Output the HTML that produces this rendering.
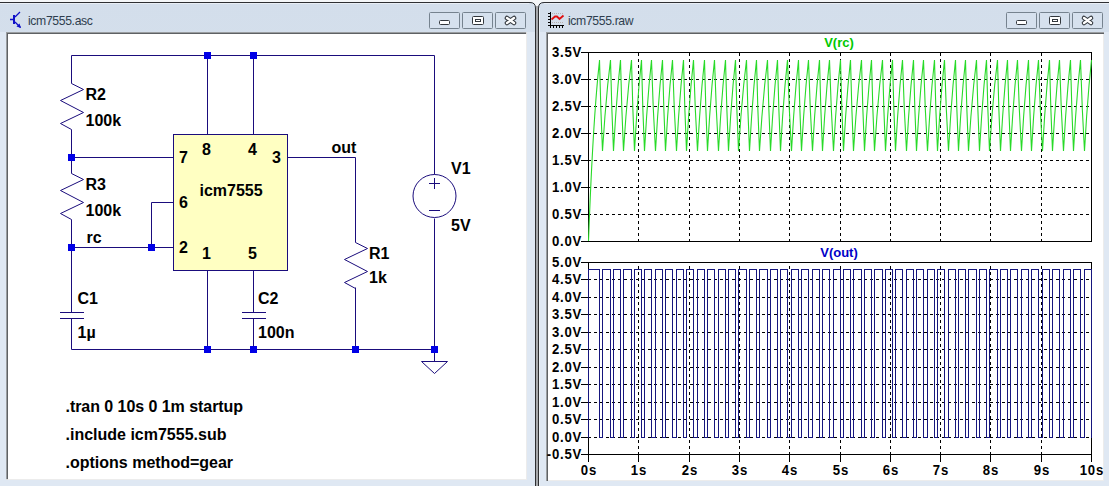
<!DOCTYPE html>
<html><head><meta charset="utf-8"><style>
html,body{margin:0;padding:0;width:1109px;height:486px;overflow:hidden;background:#eef1f5}
svg{display:block}
</style></head><body>
<svg width="1109" height="486" viewBox="0 0 1109 486">
<defs><linearGradient id="fg" x1="0" y1="0" x2="0" y2="1"><stop offset="0" stop-color="#d3deeb"/><stop offset="1" stop-color="#dfe8f3"/></linearGradient></defs>
<rect x="0" y="0" width="1109" height="486" fill="#f4f6f8"/>
<path d="M-10 486 L-10 8 Q-10 2 -4 2 L530 2 Q536 2 536 8 L536 486 Z" fill="url(#fg)"/>
<rect x="0" y="32" width="535" height="454" fill="#dfe8f3"/>
<path d="M535.5 486 L535.5 8 Q535.5 2.5 530 2.5 L-10 2.5" fill="none" stroke="#2e3033" stroke-width="1"/>
<path d="M-10 3.5 L529 3.5" stroke="#e8eef5" stroke-width="1"/>
<rect x="536" y="6" width="2" height="480" fill="#a6a8ab"/>
<path d="M538 486 L538 8 Q538 2 544 2 L1120 2 L1120 486 Z" fill="url(#fg)"/>
<rect x="539" y="32" width="580" height="454" fill="#dfe8f3"/>
<path d="M538.5 486 L538.5 8 Q538.5 2.5 544 2.5 L1120 2.5" fill="none" stroke="#2e3033" stroke-width="1"/>
<path d="M544 3.5 L1120 3.5" stroke="#e8eef5" stroke-width="1"/>
<rect x="539" y="8" width="1" height="478" fill="#eaf0f6"/>
<rect x="6" y="32" width="521" height="448" fill="#dedede"/>
<rect x="6" y="32" width="520" height="447" fill="#9a9da0"/>
<rect x="7" y="33" width="519" height="446" fill="#5e6164"/>
<rect x="8" y="34" width="518" height="445" fill="#ffffff"/>
<rect x="526" y="34" width="1" height="446" fill="#ececec"/><rect x="8" y="479" width="519" height="1" fill="#ececec"/>
<rect x="546" y="32" width="558" height="449" fill="#9a9da0"/>
<rect x="547" y="33" width="557" height="448" fill="#5e6164"/>
<rect x="548" y="34" width="555" height="446" fill="#ffffff"/>
<rect x="1103" y="34" width="1" height="447" fill="#ececec"/><rect x="548" y="480" width="556" height="1" fill="#ececec"/>
<text x="28" y="24.6" font-family="Liberation Sans" font-size="12.2" letter-spacing="-0.35" fill="#2e3d4e">icm7555.asc</text>
<text x="568" y="24.6" font-family="Liberation Sans" font-size="12.2" letter-spacing="-0.35" fill="#2e3d4e">icm7555.raw</text>
<rect x="429.5" y="12.5" width="30" height="16" rx="1" fill="#d6e1ee" stroke="#76838f"/><rect x="462.5" y="12.5" width="30" height="16" rx="1" fill="#d6e1ee" stroke="#76838f"/><rect x="495.5" y="12.5" width="30" height="16" rx="1" fill="#d6e1ee" stroke="#76838f"/><rect x="439.5" y="20.5" width="10" height="4" rx="1" fill="#fff" stroke="#33383e"/><rect x="472.5" y="16.5" width="11" height="8" rx="1" fill="#fff" stroke="#33383e"/><rect x="475.5" y="19.5" width="5" height="2" fill="#fff" stroke="#33383e"/><path d="M507.0 18.0 L514.0 23.0 M514.0 18.0 L507.0 23.0" stroke="#33383e" stroke-width="4.6" stroke-linecap="round"/><path d="M507.0 18.0 L514.0 23.0 M514.0 18.0 L507.0 23.0" stroke="#fff" stroke-width="2.4" stroke-linecap="round"/>
<rect x="1006.5" y="12.5" width="30" height="16" rx="1" fill="#d6e1ee" stroke="#76838f"/><rect x="1039.5" y="12.5" width="30" height="16" rx="1" fill="#d6e1ee" stroke="#76838f"/><rect x="1072.5" y="12.5" width="30" height="16" rx="1" fill="#d6e1ee" stroke="#76838f"/><rect x="1016.5" y="20.5" width="10" height="4" rx="1" fill="#fff" stroke="#33383e"/><rect x="1049.5" y="16.5" width="11" height="8" rx="1" fill="#fff" stroke="#33383e"/><rect x="1052.5" y="19.5" width="5" height="2" fill="#fff" stroke="#33383e"/><path d="M1084.0 18.0 L1091.0 23.0 M1091.0 18.0 L1084.0 23.0" stroke="#33383e" stroke-width="4.6" stroke-linecap="round"/><path d="M1084.0 18.0 L1091.0 23.0 M1091.0 18.0 L1084.0 23.0" stroke="#fff" stroke-width="2.4" stroke-linecap="round"/>
<g stroke="#1010c8" fill="none" stroke-width="1.3"><path d="M10 19.5 L13 19.5 M15 17 L20 12 M15 22 L20.5 27.5"/></g>
<rect x="13" y="15" width="2" height="9" fill="#1010c8"/>
<path d="M21 28 L16.5 26.5 L19.5 23.5 Z" fill="#1010c8"/>
<path d="M552 13.5 L563 13.5 M552 22.5 L563 22.5" stroke="#b8b0b0" stroke-dasharray="1 1"/>
<rect x="550" y="12" width="1" height="16" fill="#000"/><rect x="548" y="25" width="16" height="1" fill="#000"/>
<rect x="548" y="13" width="2" height="1" fill="#000"/>
<rect x="548" y="16" width="2" height="1" fill="#000"/>
<rect x="548" y="19" width="2" height="1" fill="#000"/>
<rect x="548" y="22" width="2" height="1" fill="#000"/>
<rect x="550" y="26" width="1" height="2" fill="#000"/>
<rect x="553" y="26" width="1" height="2" fill="#000"/>
<rect x="556" y="26" width="1" height="2" fill="#000"/>
<rect x="559" y="26" width="1" height="2" fill="#000"/>
<rect x="562" y="26" width="1" height="2" fill="#000"/>
<path d="M551.5 19.5 L555 16.5 L557 16.5 L559.5 19 L563.5 15.5" stroke="#e01010" stroke-width="1.8" fill="none"/>
<rect x="173.5" y="134.5" width="114" height="136" fill="#ffffc2" stroke="#1a0c7c"/>
<path d="M71.5 55.5 L434.5 55.5" fill="none" stroke="#1a0c7c" stroke-width="1"/>
<path d="M71.5 55.5 L71.5 83.5" fill="none" stroke="#1a0c7c" stroke-width="1"/>
<path d="M71.5 129.5 L71.5 173.5" fill="none" stroke="#1a0c7c" stroke-width="1"/>
<path d="M71.5 219.5 L71.5 312.5" fill="none" stroke="#1a0c7c" stroke-width="1"/>
<path d="M71.5 318.5 L71.5 349.5" fill="none" stroke="#1a0c7c" stroke-width="1"/>
<path d="M71.5 349.5 L434.5 349.5" fill="none" stroke="#1a0c7c" stroke-width="1"/>
<path d="M71.5 157.5 L173.5 157.5" fill="none" stroke="#1a0c7c" stroke-width="1"/>
<path d="M151.5 202.5 L173.5 202.5" fill="none" stroke="#1a0c7c" stroke-width="1"/>
<path d="M71.5 247.5 L173.5 247.5" fill="none" stroke="#1a0c7c" stroke-width="1"/>
<path d="M151.5 202.5 L151.5 247.5" fill="none" stroke="#1a0c7c" stroke-width="1"/>
<path d="M207.5 55.5 L207.5 134.5" fill="none" stroke="#1a0c7c" stroke-width="1"/>
<path d="M253.5 55.5 L253.5 134.5" fill="none" stroke="#1a0c7c" stroke-width="1"/>
<path d="M207.5 270.5 L207.5 349.5" fill="none" stroke="#1a0c7c" stroke-width="1"/>
<path d="M253.5 270.5 L253.5 312.5" fill="none" stroke="#1a0c7c" stroke-width="1"/>
<path d="M253.5 318.5 L253.5 349.5" fill="none" stroke="#1a0c7c" stroke-width="1"/>
<path d="M287.5 157.5 L355.5 157.5 L355.5 242.5" fill="none" stroke="#1a0c7c" stroke-width="1"/>
<path d="M355.5 287.5 L355.5 349.5" fill="none" stroke="#1a0c7c" stroke-width="1"/>
<path d="M434.5 55.5 L434.5 174.5" fill="none" stroke="#1a0c7c" stroke-width="1"/>
<path d="M434.5 218.5 L434.5 361.5" fill="none" stroke="#1a0c7c" stroke-width="1"/>
<path d="M71.5 83.5 L83.5 89.5 L60.5 100.5 L83.5 112.5 L60.5 123.5 L71.5 129.5" fill="none" stroke="#1a0c7c" stroke-width="1"/>
<path d="M71.5 173.5 L83.5 179.5 L60.5 190.5 L83.5 202.5 L60.5 213.5 L71.5 219.5" fill="none" stroke="#1a0c7c" stroke-width="1"/>
<path d="M355.5 242.5 L367.5 248.5 L344.5 259.5 L367.5 271.5 L344.5 282.5 L355.5 288.5" fill="none" stroke="#1a0c7c" stroke-width="1"/>
<path d="M60 312.5 L84 312.5 M60 318.5 L84 318.5" stroke="#1a0c7c" stroke-width="1" fill="none"/>
<path d="M242 312.5 L266 312.5 M242 318.5 L266 318.5" stroke="#1a0c7c" stroke-width="1" fill="none"/>
<circle cx="434.5" cy="196" r="21.5" fill="none" stroke="#1a0c7c"/>
<path d="M429 183.5 L440 183.5 M434.5 178 L434.5 189 M429 210.5 L440 210.5" stroke="#1a0c7c" fill="none"/>
<path d="M421.5 361.5 L447.5 361.5 L434.5 373.5 Z" fill="none" stroke="#1a0c7c"/>
<rect x="204" y="52" width="7" height="7" fill="#0000e6"/>
<rect x="250" y="52" width="7" height="7" fill="#0000e6"/>
<rect x="68" y="154" width="7" height="7" fill="#0000e6"/>
<rect x="68" y="244" width="7" height="7" fill="#0000e6"/>
<rect x="148" y="244" width="7" height="7" fill="#0000e6"/>
<rect x="204" y="346" width="7" height="7" fill="#0000e6"/>
<rect x="250" y="346" width="7" height="7" fill="#0000e6"/>
<rect x="352" y="346" width="7" height="7" fill="#0000e6"/>
<rect x="431" y="346" width="7" height="7" fill="#0000e6"/>
<text x="85.5" y="100" font-family="Liberation Sans" font-weight="bold" font-size="16" fill="#000" >R2</text>
<text x="85.5" y="126" font-family="Liberation Sans" font-weight="bold" font-size="16" fill="#000" >100k</text>
<text x="85.5" y="190" font-family="Liberation Sans" font-weight="bold" font-size="16" fill="#000" >R3</text>
<text x="85.5" y="216" font-family="Liberation Sans" font-weight="bold" font-size="16" fill="#000" >100k</text>
<text x="86.5" y="243" font-family="Liberation Sans" font-weight="bold" font-size="16" fill="#000" >rc</text>
<text x="77.5" y="304" font-family="Liberation Sans" font-weight="bold" font-size="16" fill="#000" >C1</text>
<text x="77.5" y="338" font-family="Liberation Sans" font-weight="bold" font-size="16" fill="#000" >1µ</text>
<text x="258" y="304" font-family="Liberation Sans" font-weight="bold" font-size="16" fill="#000" >C2</text>
<text x="258" y="338" font-family="Liberation Sans" font-weight="bold" font-size="16" fill="#000" >100n</text>
<text x="369" y="259" font-family="Liberation Sans" font-weight="bold" font-size="16" fill="#000" >R1</text>
<text x="369" y="283" font-family="Liberation Sans" font-weight="bold" font-size="16" fill="#000" >1k</text>
<text x="331.5" y="153" font-family="Liberation Sans" font-weight="bold" font-size="16" fill="#000" >out</text>
<text x="451" y="174" font-family="Liberation Sans" font-weight="bold" font-size="16" fill="#000" >V1</text>
<text x="451" y="231" font-family="Liberation Sans" font-weight="bold" font-size="16" fill="#000" >5V</text>
<text x="199.5" y="195.5" font-family="Liberation Sans" font-weight="bold" font-size="16" fill="#000" >icm7555</text>
<text x="179" y="163" font-family="Liberation Sans" font-weight="bold" font-size="16" fill="#000" >7</text>
<text x="202" y="155" font-family="Liberation Sans" font-weight="bold" font-size="16" fill="#000" >8</text>
<text x="248" y="155" font-family="Liberation Sans" font-weight="bold" font-size="16" fill="#000" >4</text>
<text x="272" y="163" font-family="Liberation Sans" font-weight="bold" font-size="16" fill="#000" >3</text>
<text x="179" y="208" font-family="Liberation Sans" font-weight="bold" font-size="16" fill="#000" >6</text>
<text x="179" y="253" font-family="Liberation Sans" font-weight="bold" font-size="16" fill="#000" >2</text>
<text x="202" y="259" font-family="Liberation Sans" font-weight="bold" font-size="16" fill="#000" >1</text>
<text x="248" y="259" font-family="Liberation Sans" font-weight="bold" font-size="16" fill="#000" >5</text>
<text x="65.5" y="412" font-family="Liberation Sans" font-weight="bold" font-size="16" fill="#000" letter-spacing="-0.05">.tran 0 10s 0 1m startup</text>
<text x="65.5" y="440" font-family="Liberation Sans" font-weight="bold" font-size="16" fill="#000" >.include icm7555.sub</text>
<text x="65.5" y="468" font-family="Liberation Sans" font-weight="bold" font-size="16" fill="#000" >.options method=gear</text>
<g shape-rendering="crispEdges"><path d="M588 79.5 H1091" stroke="#000" stroke-dasharray="3 3"/><path d="M588 106.5 H1091" stroke="#000" stroke-dasharray="3 3"/><path d="M588 133.5 H1091" stroke="#000" stroke-dasharray="3 3"/><path d="M588 160.5 H1091" stroke="#000" stroke-dasharray="3 3"/><path d="M588 187.5 H1091" stroke="#000" stroke-dasharray="3 3"/><path d="M588 214.5 H1091" stroke="#000" stroke-dasharray="3 3"/><path d="M638.5 53 V241" stroke="#000" stroke-dasharray="3 3"/><path d="M689.5 53 V241" stroke="#000" stroke-dasharray="3 3"/><path d="M739.5 53 V241" stroke="#000" stroke-dasharray="3 3"/><path d="M789.5 53 V241" stroke="#000" stroke-dasharray="3 3"/><path d="M840.5 53 V241" stroke="#000" stroke-dasharray="3 3"/><path d="M890.5 53 V241" stroke="#000" stroke-dasharray="3 3"/><path d="M940.5 53 V241" stroke="#000" stroke-dasharray="3 3"/><path d="M990.5 53 V241" stroke="#000" stroke-dasharray="3 3"/><path d="M1041.5 53 V241" stroke="#000" stroke-dasharray="3 3"/><path d="M588 437.5 H1091" stroke="#000" stroke-dasharray="3 3"/><path d="M588 419.5 H1091" stroke="#000" stroke-dasharray="3 3"/><path d="M588 402.5 H1091" stroke="#000" stroke-dasharray="3 3"/><path d="M588 384.5 H1091" stroke="#000" stroke-dasharray="3 3"/><path d="M588 367.5 H1091" stroke="#000" stroke-dasharray="3 3"/><path d="M588 349.5 H1091" stroke="#000" stroke-dasharray="3 3"/><path d="M588 332.5 H1091" stroke="#000" stroke-dasharray="3 3"/><path d="M588 314.5 H1091" stroke="#000" stroke-dasharray="3 3"/><path d="M588 297.5 H1091" stroke="#000" stroke-dasharray="3 3"/><path d="M588 279.5 H1091" stroke="#000" stroke-dasharray="3 3"/><path d="M638.5 263 V454" stroke="#000" stroke-dasharray="3 3" stroke-dashoffset="3"/><path d="M689.5 263 V454" stroke="#000" stroke-dasharray="3 3" stroke-dashoffset="3"/><path d="M739.5 263 V454" stroke="#000" stroke-dasharray="3 3" stroke-dashoffset="3"/><path d="M789.5 263 V454" stroke="#000" stroke-dasharray="3 3" stroke-dashoffset="3"/><path d="M840.5 263 V454" stroke="#000" stroke-dasharray="3 3" stroke-dashoffset="3"/><path d="M890.5 263 V454" stroke="#000" stroke-dasharray="3 3" stroke-dashoffset="3"/><path d="M940.5 263 V454" stroke="#000" stroke-dasharray="3 3" stroke-dashoffset="3"/><path d="M990.5 263 V454" stroke="#000" stroke-dasharray="3 3" stroke-dashoffset="3"/><path d="M1041.5 263 V454" stroke="#000" stroke-dasharray="3 3" stroke-dashoffset="3"/></g>
<rect x="588.5" y="52.5" width="503" height="189" fill="none" stroke="#000" shape-rendering="crispEdges"/>
<rect x="588.5" y="262.5" width="503" height="192" fill="none" stroke="#000" shape-rendering="crispEdges"/>
<polyline points="588.50,241.00 588.75,234.33 589.00,227.83 589.25,221.49 589.50,215.31 589.75,209.27 590.00,203.39 590.25,197.65 590.50,192.06 590.75,186.60 591.00,181.28 591.25,176.08 591.50,171.02 591.75,166.08 592.00,161.27 592.25,156.57 592.50,151.99 592.75,147.52 593.00,143.16 593.25,138.91 593.50,134.76 593.75,130.72 594.00,126.78 594.25,122.93 594.50,119.18 594.75,115.52 595.00,111.95 595.25,108.47 595.50,105.08 595.75,101.77 596.00,98.54 596.25,95.39 596.50,92.32 596.75,89.32 597.00,86.40 597.25,83.55 597.50,80.77 597.75,78.06 598.00,75.42 598.25,72.84 598.50,70.33 598.75,67.88 599.00,65.48 599.25,63.15 599.50,60.88 599.50,60.10 600.85,108.86 602.50,150.98 604.90,116.76 607.70,84.96 610.50,60.10 611.85,108.86 613.50,150.98 615.60,116.76 618.05,84.96 620.50,60.10 621.85,108.86 623.50,150.98 625.90,116.76 628.70,84.96 631.50,60.10 632.85,108.86 634.50,150.98 636.60,116.76 639.05,84.96 641.50,60.10 642.85,108.86 644.50,150.98 646.60,116.76 649.05,84.96 651.50,60.10 653.30,108.86 655.50,150.98 657.60,116.76 660.05,84.96 662.50,60.10 663.85,108.86 665.50,150.98 667.60,116.76 670.05,84.96 672.50,60.10 674.30,108.86 676.50,150.98 678.60,116.76 681.05,84.96 683.50,60.10 684.85,108.86 686.50,150.98 688.60,116.76 691.05,84.96 693.50,60.10 695.30,108.86 697.50,150.98 699.60,116.76 702.05,84.96 704.50,60.10 705.85,108.86 707.50,150.98 709.60,116.76 712.05,84.96 714.50,60.10 716.30,108.86 718.50,150.98 720.60,116.76 723.05,84.96 725.50,60.10 726.85,108.86 728.50,150.98 730.60,116.76 733.05,84.96 735.50,60.10 736.85,108.86 738.50,150.98 740.90,116.76 743.70,84.96 746.50,60.10 747.85,108.86 749.50,150.98 751.60,116.76 754.05,84.96 756.50,60.10 757.85,108.86 759.50,150.98 761.90,116.76 764.70,84.96 767.50,60.10 768.85,108.86 770.50,150.98 772.60,116.76 775.05,84.96 777.50,60.10 778.85,108.86 780.50,150.98 782.60,116.76 785.05,84.96 787.50,60.10 789.30,108.86 791.50,150.98 793.60,116.76 796.05,84.96 798.50,60.10 799.85,108.86 801.50,150.98 803.60,116.76 806.05,84.96 808.50,60.10 810.30,108.86 812.50,150.98 814.60,116.76 817.05,84.96 819.50,60.10 820.85,108.86 822.50,150.98 824.60,116.76 827.05,84.96 829.50,60.10 831.30,108.86 833.50,150.98 835.60,116.76 838.05,84.96 840.50,60.10 841.85,108.86 843.50,150.98 845.60,116.76 848.05,84.96 850.50,60.10 851.85,108.86 853.50,150.98 855.90,116.76 858.70,84.96 861.50,60.10 862.85,108.86 864.50,150.98 866.60,116.76 869.05,84.96 871.50,60.10 872.85,108.86 874.50,150.98 876.90,116.76 879.70,84.96 882.50,60.10 883.85,108.86 885.50,150.98 887.60,116.76 890.05,84.96 892.50,60.10 893.85,108.86 895.50,150.98 897.60,116.76 900.05,84.96 902.50,60.10 904.30,108.86 906.50,150.98 908.60,116.76 911.05,84.96 913.50,60.10 914.85,108.86 916.50,150.98 918.60,116.76 921.05,84.96 923.50,60.10 925.30,108.86 927.50,150.98 929.60,116.76 932.05,84.96 934.50,60.10 935.85,108.86 937.50,150.98 939.60,116.76 942.05,84.96 944.50,60.10 946.30,108.86 948.50,150.98 950.60,116.76 953.05,84.96 955.50,60.10 956.85,108.86 958.50,150.98 960.60,116.76 963.05,84.96 965.50,60.10 966.85,108.86 968.50,150.98 970.90,116.76 973.70,84.96 976.50,60.10 977.85,108.86 979.50,150.98 981.60,116.76 984.05,84.96 986.50,60.10 987.85,108.86 989.50,150.98 991.90,116.76 994.70,84.96 997.50,60.10 998.85,108.86 1000.50,150.98 1002.60,116.76 1005.05,84.96 1007.50,60.10 1008.85,108.86 1010.50,150.98 1012.60,116.76 1015.05,84.96 1017.50,60.10 1019.30,108.86 1021.50,150.98 1023.60,116.76 1026.05,84.96 1028.50,60.10 1029.85,108.86 1031.50,150.98 1033.60,116.76 1036.05,84.96 1038.50,60.10 1040.30,108.86 1042.50,150.98 1044.60,116.76 1047.05,84.96 1049.50,60.10 1050.85,108.86 1052.50,150.98 1054.60,116.76 1057.05,84.96 1059.50,60.10 1061.30,108.86 1063.50,150.98 1065.60,116.76 1068.05,84.96 1070.50,60.10 1071.85,108.86 1073.50,150.98 1075.60,116.76 1078.05,84.96 1080.50,60.10 1082.30,108.86 1084.50,150.98 1086.60,116.76 1089.05,84.96 1091.50,60.10 1091.50,60.10" fill="none" stroke="#28da28" stroke-width="1.1"/>
<polyline points="588.5,437.5 588.5,269.5 599.5,269.5 599.5,437.5 602.5,437.5 602.5,269.5 610.5,269.5 610.5,437.5 613.5,437.5 613.5,269.5 620.5,269.5 620.5,437.5 623.5,437.5 623.5,269.5 631.5,269.5 631.5,437.5 634.5,437.5 634.5,269.5 641.5,269.5 641.5,437.5 644.5,437.5 644.5,269.5 651.5,269.5 651.5,437.5 655.5,437.5 655.5,269.5 662.5,269.5 662.5,437.5 665.5,437.5 665.5,269.5 672.5,269.5 672.5,437.5 676.5,437.5 676.5,269.5 683.5,269.5 683.5,437.5 686.5,437.5 686.5,269.5 693.5,269.5 693.5,437.5 697.5,437.5 697.5,269.5 704.5,269.5 704.5,437.5 707.5,437.5 707.5,269.5 714.5,269.5 714.5,437.5 718.5,437.5 718.5,269.5 725.5,269.5 725.5,437.5 728.5,437.5 728.5,269.5 735.5,269.5 735.5,437.5 738.5,437.5 738.5,269.5 746.5,269.5 746.5,437.5 749.5,437.5 749.5,269.5 756.5,269.5 756.5,437.5 759.5,437.5 759.5,269.5 767.5,269.5 767.5,437.5 770.5,437.5 770.5,269.5 777.5,269.5 777.5,437.5 780.5,437.5 780.5,269.5 787.5,269.5 787.5,437.5 791.5,437.5 791.5,269.5 798.5,269.5 798.5,437.5 801.5,437.5 801.5,269.5 808.5,269.5 808.5,437.5 812.5,437.5 812.5,269.5 819.5,269.5 819.5,437.5 822.5,437.5 822.5,269.5 829.5,269.5 829.5,437.5 833.5,437.5 833.5,269.5 840.5,269.5 840.5,437.5 843.5,437.5 843.5,269.5 850.5,269.5 850.5,437.5 853.5,437.5 853.5,269.5 861.5,269.5 861.5,437.5 864.5,437.5 864.5,269.5 871.5,269.5 871.5,437.5 874.5,437.5 874.5,269.5 882.5,269.5 882.5,437.5 885.5,437.5 885.5,269.5 892.5,269.5 892.5,437.5 895.5,437.5 895.5,269.5 902.5,269.5 902.5,437.5 906.5,437.5 906.5,269.5 913.5,269.5 913.5,437.5 916.5,437.5 916.5,269.5 923.5,269.5 923.5,437.5 927.5,437.5 927.5,269.5 934.5,269.5 934.5,437.5 937.5,437.5 937.5,269.5 944.5,269.5 944.5,437.5 948.5,437.5 948.5,269.5 955.5,269.5 955.5,437.5 958.5,437.5 958.5,269.5 965.5,269.5 965.5,437.5 968.5,437.5 968.5,269.5 976.5,269.5 976.5,437.5 979.5,437.5 979.5,269.5 986.5,269.5 986.5,437.5 989.5,437.5 989.5,269.5 997.5,269.5 997.5,437.5 1000.5,437.5 1000.5,269.5 1007.5,269.5 1007.5,437.5 1010.5,437.5 1010.5,269.5 1017.5,269.5 1017.5,437.5 1021.5,437.5 1021.5,269.5 1028.5,269.5 1028.5,437.5 1031.5,437.5 1031.5,269.5 1038.5,269.5 1038.5,437.5 1042.5,437.5 1042.5,269.5 1049.5,269.5 1049.5,437.5 1052.5,437.5 1052.5,269.5 1059.5,269.5 1059.5,437.5 1063.5,437.5 1063.5,269.5 1070.5,269.5 1070.5,437.5 1073.5,437.5 1073.5,269.5 1080.5,269.5 1080.5,437.5 1084.5,437.5 1084.5,269.5 1091.5,269.5 1091.5,437.5 1091.5,437.5 1091.5,269.5 1091.5,269.5" fill="none" stroke="#16167e" stroke-width="1" shape-rendering="crispEdges"/>
<g transform="translate(582,245.6) scale(0.94,1)"><text x="0" y="0" text-anchor="end" font-family="Liberation Sans" font-weight="bold" font-size="14" letter-spacing="0.8">0.0V</text></g>
<g transform="translate(582,218.6) scale(0.94,1)"><text x="0" y="0" text-anchor="end" font-family="Liberation Sans" font-weight="bold" font-size="14" letter-spacing="0.8">0.5V</text></g>
<g transform="translate(582,191.6) scale(0.94,1)"><text x="0" y="0" text-anchor="end" font-family="Liberation Sans" font-weight="bold" font-size="14" letter-spacing="0.8">1.0V</text></g>
<g transform="translate(582,164.6) scale(0.94,1)"><text x="0" y="0" text-anchor="end" font-family="Liberation Sans" font-weight="bold" font-size="14" letter-spacing="0.8">1.5V</text></g>
<g transform="translate(582,137.6) scale(0.94,1)"><text x="0" y="0" text-anchor="end" font-family="Liberation Sans" font-weight="bold" font-size="14" letter-spacing="0.8">2.0V</text></g>
<g transform="translate(582,110.6) scale(0.94,1)"><text x="0" y="0" text-anchor="end" font-family="Liberation Sans" font-weight="bold" font-size="14" letter-spacing="0.8">2.5V</text></g>
<g transform="translate(582,83.6) scale(0.94,1)"><text x="0" y="0" text-anchor="end" font-family="Liberation Sans" font-weight="bold" font-size="14" letter-spacing="0.8">3.0V</text></g>
<g transform="translate(582,56.6) scale(0.94,1)"><text x="0" y="0" text-anchor="end" font-family="Liberation Sans" font-weight="bold" font-size="14" letter-spacing="0.8">3.5V</text></g>
<g transform="translate(582,458.6) scale(0.94,1)"><text x="0" y="0" text-anchor="end" font-family="Liberation Sans" font-weight="bold" font-size="14" letter-spacing="0.8">-0.5V</text></g>
<g transform="translate(582,441.6) scale(0.94,1)"><text x="0" y="0" text-anchor="end" font-family="Liberation Sans" font-weight="bold" font-size="14" letter-spacing="0.8">0.0V</text></g>
<g transform="translate(582,423.6) scale(0.94,1)"><text x="0" y="0" text-anchor="end" font-family="Liberation Sans" font-weight="bold" font-size="14" letter-spacing="0.8">0.5V</text></g>
<g transform="translate(582,406.6) scale(0.94,1)"><text x="0" y="0" text-anchor="end" font-family="Liberation Sans" font-weight="bold" font-size="14" letter-spacing="0.8">1.0V</text></g>
<g transform="translate(582,388.6) scale(0.94,1)"><text x="0" y="0" text-anchor="end" font-family="Liberation Sans" font-weight="bold" font-size="14" letter-spacing="0.8">1.5V</text></g>
<g transform="translate(582,371.6) scale(0.94,1)"><text x="0" y="0" text-anchor="end" font-family="Liberation Sans" font-weight="bold" font-size="14" letter-spacing="0.8">2.0V</text></g>
<g transform="translate(582,353.6) scale(0.94,1)"><text x="0" y="0" text-anchor="end" font-family="Liberation Sans" font-weight="bold" font-size="14" letter-spacing="0.8">2.5V</text></g>
<g transform="translate(582,336.6) scale(0.94,1)"><text x="0" y="0" text-anchor="end" font-family="Liberation Sans" font-weight="bold" font-size="14" letter-spacing="0.8">3.0V</text></g>
<g transform="translate(582,318.6) scale(0.94,1)"><text x="0" y="0" text-anchor="end" font-family="Liberation Sans" font-weight="bold" font-size="14" letter-spacing="0.8">3.5V</text></g>
<g transform="translate(582,301.6) scale(0.94,1)"><text x="0" y="0" text-anchor="end" font-family="Liberation Sans" font-weight="bold" font-size="14" letter-spacing="0.8">4.0V</text></g>
<g transform="translate(582,283.6) scale(0.94,1)"><text x="0" y="0" text-anchor="end" font-family="Liberation Sans" font-weight="bold" font-size="14" letter-spacing="0.8">4.5V</text></g>
<g transform="translate(582,266.6) scale(0.94,1)"><text x="0" y="0" text-anchor="end" font-family="Liberation Sans" font-weight="bold" font-size="14" letter-spacing="0.8">5.0V</text></g>
<g transform="translate(588.9,475) scale(0.94,1)"><text x="0" y="0" text-anchor="middle" font-family="Liberation Sans" font-weight="bold" font-size="14" letter-spacing="0.8">0s</text></g>
<g transform="translate(638.9,475) scale(0.94,1)"><text x="0" y="0" text-anchor="middle" font-family="Liberation Sans" font-weight="bold" font-size="14" letter-spacing="0.8">1s</text></g>
<g transform="translate(689.9,475) scale(0.94,1)"><text x="0" y="0" text-anchor="middle" font-family="Liberation Sans" font-weight="bold" font-size="14" letter-spacing="0.8">2s</text></g>
<g transform="translate(739.9,475) scale(0.94,1)"><text x="0" y="0" text-anchor="middle" font-family="Liberation Sans" font-weight="bold" font-size="14" letter-spacing="0.8">3s</text></g>
<g transform="translate(789.9,475) scale(0.94,1)"><text x="0" y="0" text-anchor="middle" font-family="Liberation Sans" font-weight="bold" font-size="14" letter-spacing="0.8">4s</text></g>
<g transform="translate(840.9,475) scale(0.94,1)"><text x="0" y="0" text-anchor="middle" font-family="Liberation Sans" font-weight="bold" font-size="14" letter-spacing="0.8">5s</text></g>
<g transform="translate(890.9,475) scale(0.94,1)"><text x="0" y="0" text-anchor="middle" font-family="Liberation Sans" font-weight="bold" font-size="14" letter-spacing="0.8">6s</text></g>
<g transform="translate(940.9,475) scale(0.94,1)"><text x="0" y="0" text-anchor="middle" font-family="Liberation Sans" font-weight="bold" font-size="14" letter-spacing="0.8">7s</text></g>
<g transform="translate(990.9,475) scale(0.94,1)"><text x="0" y="0" text-anchor="middle" font-family="Liberation Sans" font-weight="bold" font-size="14" letter-spacing="0.8">8s</text></g>
<g transform="translate(1041.9,475) scale(0.94,1)"><text x="0" y="0" text-anchor="middle" font-family="Liberation Sans" font-weight="bold" font-size="14" letter-spacing="0.8">9s</text></g>
<g transform="translate(1091.9,475) scale(0.94,1)"><text x="0" y="0" text-anchor="middle" font-family="Liberation Sans" font-weight="bold" font-size="14" letter-spacing="0.8">10s</text></g>
<g shape-rendering="crispEdges"><path d="M581 241.5 H588" stroke="#000"/><path d="M581 214.5 H588" stroke="#000"/><path d="M581 187.5 H588" stroke="#000"/><path d="M581 160.5 H588" stroke="#000"/><path d="M581 133.5 H588" stroke="#000"/><path d="M581 106.5 H588" stroke="#000"/><path d="M581 79.5 H588" stroke="#000"/><path d="M581 52.5 H588" stroke="#000"/><path d="M581 454.5 H588" stroke="#000"/><path d="M581 437.5 H588" stroke="#000"/><path d="M581 419.5 H588" stroke="#000"/><path d="M581 402.5 H588" stroke="#000"/><path d="M581 384.5 H588" stroke="#000"/><path d="M581 367.5 H588" stroke="#000"/><path d="M581 349.5 H588" stroke="#000"/><path d="M581 332.5 H588" stroke="#000"/><path d="M581 314.5 H588" stroke="#000"/><path d="M581 297.5 H588" stroke="#000"/><path d="M581 279.5 H588" stroke="#000"/><path d="M581 262.5 H588" stroke="#000"/><path d="M588.5 454 V462" stroke="#000"/><path d="M638.5 454 V462" stroke="#000"/><path d="M689.5 454 V462" stroke="#000"/><path d="M739.5 454 V462" stroke="#000"/><path d="M789.5 454 V462" stroke="#000"/><path d="M840.5 454 V462" stroke="#000"/><path d="M890.5 454 V462" stroke="#000"/><path d="M940.5 454 V462" stroke="#000"/><path d="M990.5 454 V462" stroke="#000"/><path d="M1041.5 454 V462" stroke="#000"/><path d="M1091.5 454 V462" stroke="#000"/></g>
<text x="839" y="47" text-anchor="middle" font-family="Liberation Sans" font-weight="bold" font-size="13" fill="#00c800">V(rc)</text>
<text x="839" y="257" text-anchor="middle" font-family="Liberation Sans" font-weight="bold" font-size="13" fill="#0000c8">V(out)</text>
</svg></body></html>
